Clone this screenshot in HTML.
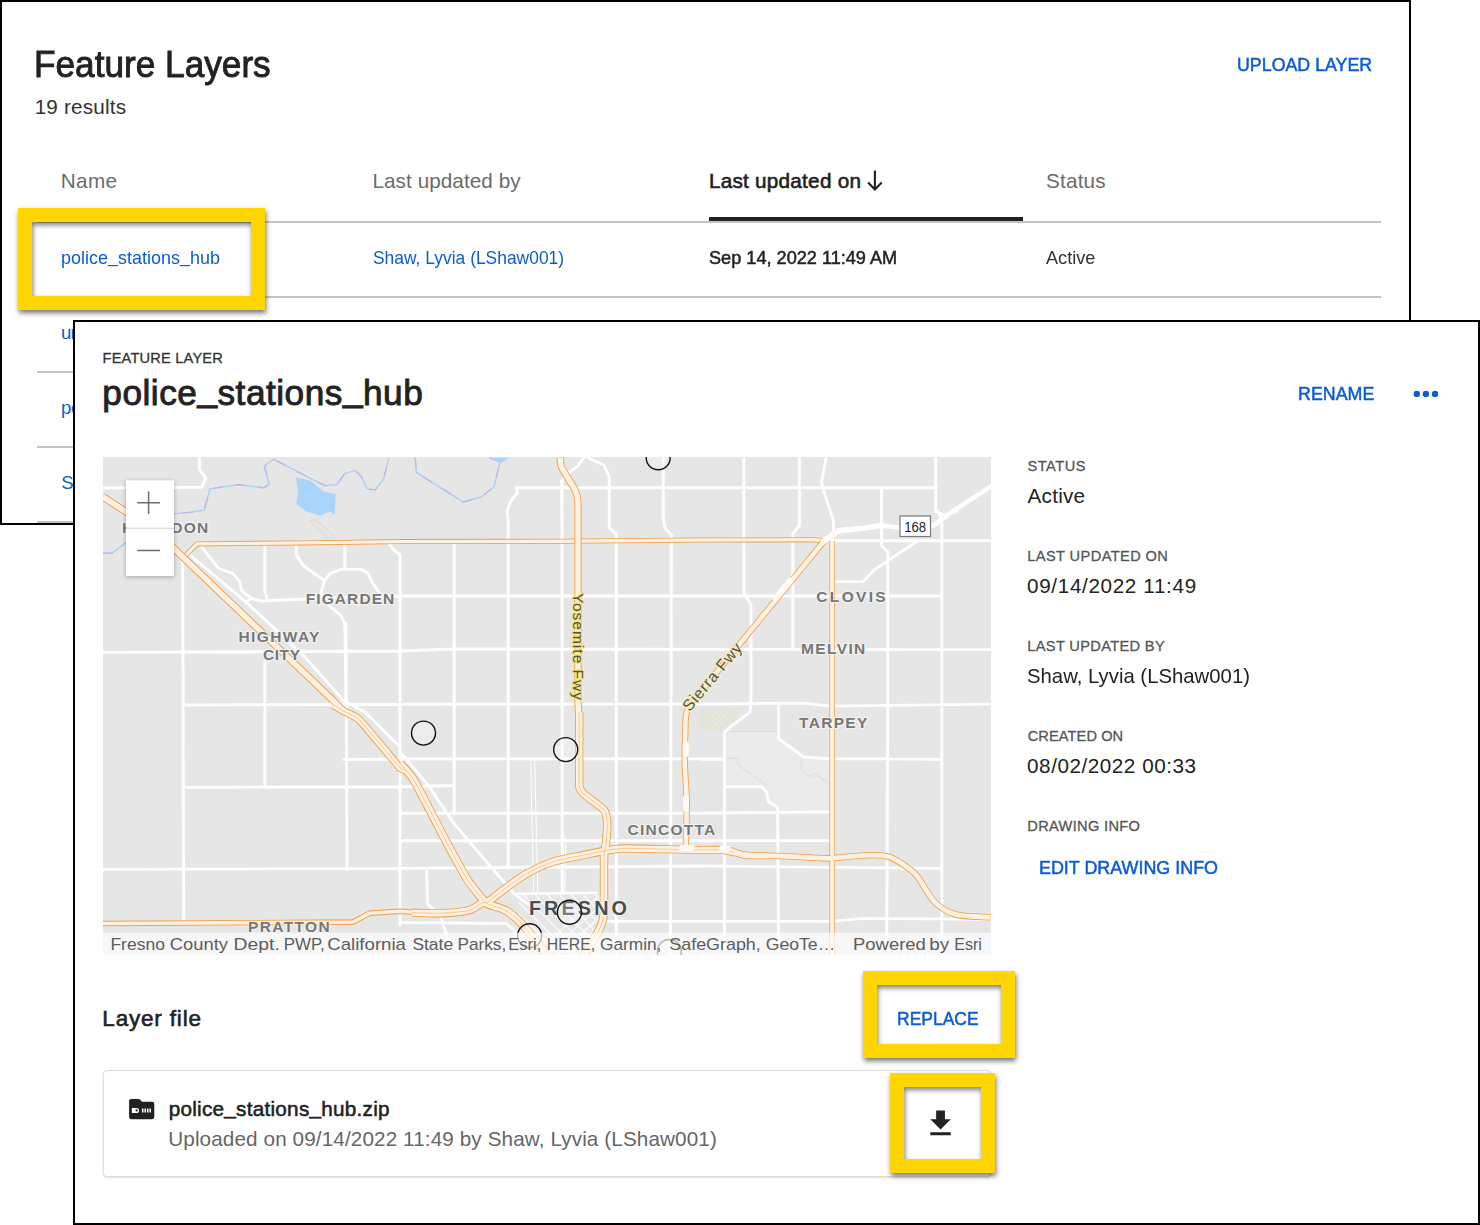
<!DOCTYPE html>
<html lang="en"><head><meta charset="utf-8"><title>Feature Layers</title>
<style>
html,body{margin:0;padding:0;background:#fff;}
body{width:1480px;height:1225px;position:relative;overflow:hidden;font-family:"Liberation Sans",sans-serif;}
.t{position:absolute;white-space:nowrap;line-height:1;}
.abs{position:absolute;}
.u{position:relative;top:-0.12em;}
.panel{position:absolute;box-sizing:border-box;border:2px solid #000;background:#fff;}
.hl{position:absolute;box-sizing:border-box;border:14.5px solid #ffd600;box-shadow:1px 3px 5px rgba(0,0,0,.55), inset 1px 3px 5px rgba(0,0,0,.5);}
.line{position:absolute;height:2px;background:#c4c4c4;}
</style></head><body>
    
<section class="list-view">
<div class="panel" style="left:0;top:0;width:1411px;height:525px;"></div>
<div class="t" style="left:33.72px;top:46.61px;font-size:36.01px;color:#222;-webkit-text-stroke:0.9px #222;transform:scaleX(0.9777);transform-origin:0 0;">Feature Layers</div>
<div class="t" style="left:34.65px;top:96.51px;font-size:20.7px;color:#333;letter-spacing:0.194px;">19 results</div>
<div class="t" style="left:1236.70px;top:55.90px;font-size:18.6px;color:#0b5cd6;-webkit-text-stroke:0.5px #0b5cd6;transform:scaleX(0.9575);transform-origin:0 0;">UPLOAD LAYER</div>
<div class="t" style="left:60.64px;top:170.51px;font-size:20.7px;color:#6b6b6b;letter-spacing:0.406px;">Name</div>
<div class="t" style="left:372.44px;top:170.51px;font-size:20.7px;color:#6b6b6b;letter-spacing:0.070px;">Last updated by</div>
<div class="t" style="left:708.94px;top:170.51px;font-size:20.7px;color:#222;letter-spacing:0.256px;-webkit-text-stroke:0.6px #222;">Last updated on</div>
<svg class="abs" style="left:864px;top:170px" width="22" height="22" viewBox="0 0 22 22"><path d="M10.9 0.6V19.4M4.1 12.6L10.9 19.6L17.7 12.6" fill="none" stroke="#222" stroke-width="2.1"/></svg>
<div class="t" style="left:1045.97px;top:170.51px;font-size:20.7px;color:#6b6b6b;letter-spacing:0.214px;">Status</div>
<div class="abs" style="left:709px;top:217px;width:314px;height:4.3px;background:#222"></div>
<div class="line" style="left:37px;top:221px;width:1344px;"></div>
<div class="line" style="left:37px;top:296px;width:1344px;"></div>
<div class="line" style="left:37px;top:371px;width:1344px;"></div>
<div class="line" style="left:37px;top:446px;width:1344px;"></div>
<div class="line" style="left:37px;top:521px;width:1344px;"></div>
<div class="t" style="left:60.92px;top:249.40px;font-size:18.6px;color:#0b5cd6;transform:scaleX(0.9670);transform-origin:0 0;">police<span class="u">_</span>stations<span class="u">_</span>hub</div>
<div class="t" style="left:372.92px;top:249.40px;font-size:18.6px;color:#0b5cd6;transform:scaleX(0.9367);transform-origin:0 0;">Shaw, Lyvia (LShaw001)</div>
<div class="t" style="left:708.93px;top:249.40px;font-size:18.6px;color:#222;-webkit-text-stroke:0.5px #222;transform:scaleX(0.9752);transform-origin:0 0;">Sep 14, 2022 11:49 AM</div>
<div class="t" style="left:1046.30px;top:249.40px;font-size:18.6px;color:#333;transform:scaleX(0.9770);transform-origin:0 0;">Active</div>
<div class="t" style="left:60.88px;top:324.40px;font-size:18.6px;color:#0b5cd6;letter-spacing:-0.659px;">ur</div>
<div class="t" style="left:60.88px;top:399.40px;font-size:18.6px;color:#0b5cd6;letter-spacing:-0.286px;">po</div>
<div class="t" style="left:61.16px;top:474.40px;font-size:18.6px;color:#0b5cd6;letter-spacing:-0.147px;">St</div>
<div class="hl" style="left:18px;top:208px;width:247px;height:101.8px;"></div>
</section>
<section class="detail-view">
<div class="panel" style="left:73px;top:320px;width:1407px;height:905px;"></div>
<div class="t" style="left:102.58px;top:350.80px;font-size:14.6px;color:#333;letter-spacing:0.196px;-webkit-text-stroke:0.3px #333;">FEATURE LAYER</div>
<div class="t" style="left:102.34px;top:375.41px;font-size:35.2px;color:#222;letter-spacing:0.520px;-webkit-text-stroke:0.9px #222;">police<span class="u">_</span>stations<span class="u">_</span>hub</div>
<div class="t" style="left:1298.41px;top:384.90px;font-size:18.6px;color:#0b5cd6;-webkit-text-stroke:0.5px #0b5cd6;transform:scaleX(0.9591);transform-origin:0 0;">RENAME</div>
<svg class="abs" style="left:1410px;top:388px" width="32" height="12" viewBox="0 0 32 12"><g fill="#0b5cd6"><circle cx="6.8" cy="5.9" r="3.2"/><circle cx="15.9" cy="5.9" r="3.2"/><circle cx="25" cy="5.9" r="3.2"/></g></svg>
<div class="t" style="left:1027.49px;top:458.61px;font-size:14.6px;color:#555;letter-spacing:0.507px;-webkit-text-stroke:0.3px #555;">STATUS</div>
<div class="t" style="left:1027.60px;top:485.81px;font-size:20.7px;color:#222;letter-spacing:0.225px;">Active</div>
<div class="t" style="left:1027.28px;top:548.61px;font-size:14.6px;color:#555;letter-spacing:0.411px;-webkit-text-stroke:0.3px #555;">LAST UPDATED ON</div>
<div class="t" style="left:1027.08px;top:576.01px;font-size:20.7px;color:#222;letter-spacing:0.637px;">09/14/2022 11:49</div>
<div class="t" style="left:1027.28px;top:638.61px;font-size:14.6px;color:#555;letter-spacing:0.355px;-webkit-text-stroke:0.3px #555;">LAST UPDATED BY</div>
<div class="t" style="left:1026.88px;top:666.01px;font-size:20.7px;color:#222;transform:scaleX(0.9826);transform-origin:0 0;">Shaw, Lyvia (LShaw001)</div>
<div class="t" style="left:1027.72px;top:728.61px;font-size:14.6px;color:#555;letter-spacing:0.091px;-webkit-text-stroke:0.3px #555;">CREATED ON</div>
<div class="t" style="left:1027.08px;top:756.01px;font-size:20.7px;color:#222;letter-spacing:0.527px;">08/02/2022 00:33</div>
<div class="t" style="left:1027.28px;top:818.61px;font-size:14.6px;color:#555;letter-spacing:0.346px;-webkit-text-stroke:0.3px #555;">DRAWING INFO</div>
<div class="t" style="left:1039.21px;top:858.70px;font-size:18.6px;color:#0b5cd6;-webkit-text-stroke:0.5px #0b5cd6;transform:scaleX(0.9626);transform-origin:0 0;">EDIT DRAWING INFO</div>
<svg class="abs" style="left:103px;top:457px" width="888" height="498" viewBox="103 457 888 498" font-family="Liberation Sans, sans-serif">
<rect x="103" y="457" width="888" height="498" fill="#e6e6e6"/>
<path d="M726.5 731.6 L776.5 731.6 L778.6 738.8 L804.1 757.1 L830.6 758.2 L830.6 810.2 L778.6 810.2 L777.6 807.1 L767.3 802.0 L765.3 789.8 L761.2 786.7 L726.5 786.7Z" fill="#ebebeb"/>
<path d="M726.5 758.2 L737.8 758.2 L737.8 764.9 L767.3 785.7" fill="none" stroke="#d2d2d2" stroke-width="0.6"/>
<path d="M726.5 731.6 L776.5 731.6" fill="none" stroke="#d2d2d2" stroke-width="0.6"/>
<path d="M801.4 758.2 L801.4 768.4 L799.4 769.8 L811.2 777.1 L814.3 773.5 L829.6 783.3" fill="none" stroke="#d2d2d2" stroke-width="0.6"/>
<path d="M700.0 708.2 L736.7 708.2 L736.7 720.4 L720.4 730.6 L700.0 730.6Z" fill="#e3e6e0"/>
<pattern id="pd" width="6" height="6" patternUnits="userSpaceOnUse"><circle cx="1.5" cy="1.5" r="0.7" fill="#e6dc9a"/><circle cx="4.5" cy="4.5" r="0.7" fill="#e6dc9a"/></pattern>
<path d="M700.0 708.2 L736.7 708.2 L736.7 720.4 L720.4 730.6 L700.0 730.6Z" fill="url(#pd)"/>
<path d="M295.9 477.6 L310.2 480.6 L324.5 491.8 L335.7 493.9 L334.7 515.3 L330.6 511.2 L320.4 515.7 L306.1 511.2 L296.3 504.1 L298.0 490.8Z" fill="#a9d4fb"/>
<path d="M492.9 457.8 L509.2 457.8 L500.0 463.5Z" fill="#a9d4fb"/>
<path d="M102.9 553.1 L112.2 553.1 L125.5 542.9 L140.8 531.6 L174.5 513.7 L191.8 512.2 L204.1 510.2 L210.2 488.8 L238.8 484.7 L263.3 487.8 L269.4 484.7 L264.3 466.3 L273.5 459.2 L324.5 485.7 L336.7 484.7 L344.9 473.5 L355.1 470.4 L361.2 476.5 L367.3 488.8 L375.5 489.8 L383.7 478.6 L388.8 458.2 M415.3 457.8 L416.3 472.4 L463.3 502.0 L481.6 496.9 L493.9 486.7 L500.0 462.2 L489.8 457.8" fill="none" stroke="#a3cff7" stroke-width="1.3"/>
<path d="M102.9 553.1 L112.2 553.1 L125.5 542.9 L140.8 531.6 L174.5 513.7 L191.8 512.2 L204.1 510.2 L210.2 488.8 L238.8 484.7 L263.3 487.8 L269.4 484.7 L264.3 466.3 L273.5 459.2 L324.5 485.7 L336.7 484.7 L344.9 473.5 L355.1 470.4 L361.2 476.5 L367.3 488.8 L375.5 489.8 L383.7 478.6 L388.8 458.2 M415.3 457.8 L416.3 472.4 L463.3 502.0 L481.6 496.9 L493.9 486.7 L500.0 462.2 L489.8 457.8" fill="none" stroke="#c4b3e6" stroke-width="1.3" stroke-dasharray="10 13"/>
<path d="M309.2 520.4 L316.3 520.4 L336.7 537.8 L324.5 537.8 L324.5 534.7 L309.2 520.4" fill="none" stroke="#cfcfcf" stroke-width="0.6"/>
<clipPath id="dt"><path d="M519 894.5H600V955H548L519 921Z"/></clipPath>
<path clip-path="url(#dt)" fill="none" stroke="#fff" stroke-opacity=".85" stroke-width="1.3" d="M427.0 894.5 L497.0 964.5 M439.0 894.5 L509.0 964.5 M451.0 894.5 L521.0 964.5 M463.0 894.5 L533.0 964.5 M475.0 894.5 L545.0 964.5 M487.0 894.5 L557.0 964.5 M499.0 894.5 L569.0 964.5 M511.0 894.5 L581.0 964.5 M523.0 894.5 L593.0 964.5 M535.0 894.5 L605.0 964.5 M547.0 894.5 L617.0 964.5 M559.0 894.5 L629.0 964.5 M571.0 894.5 L641.0 964.5 M583.0 894.5 L653.0 964.5 M595.0 894.5 L665.0 964.5 M607.0 894.5 L677.0 964.5 M619.0 894.5 L689.0 964.5 M631.0 894.5 L701.0 964.5 M523.0 964.5 L601.0 894.5 M535.0 964.5 L613.0 894.5 M547.0 964.5 L625.0 894.5 M559.0 964.5 L637.0 894.5 M571.0 964.5 L649.0 894.5 M583.0 964.5 L661.0 894.5 M595.0 964.5 L673.0 894.5 M607.0 964.5 L685.0 894.5 M619.0 964.5 L697.0 894.5 M631.0 964.5 L709.0 894.5 M643.0 964.5 L721.0 894.5 M655.0 964.5 L733.0 894.5 M667.0 964.5 L745.0 894.5 M679.0 964.5 L757.0 894.5"/>
<g fill="none" stroke="#fff" stroke-linejoin="round" stroke-linecap="round">
<path stroke-width="1" d="M530.6 760.2 L533.7 891.8 M534.7 760.2 L537.8 891.8 M530.6 760.2 L562.2 759.2 M563.3 832.7 L565.7 842.9 L564.9 891.8"/>
<path stroke-width="2.9" d="M182.7 560.0 L183.7 922.4 M264.9 544.0 L264.9 590.8 L267.3 600.0 M264.9 652.0 L264.9 785.7 M400.0 555.0 L400.0 925.0 M454.1 543.0 L454.1 814.0 M562.0 480.6 L562.2 892.0 M616.3 533.7 L616.3 955.0 M671.4 534.7 L670.4 955.0 M832.2 541.0 L832.2 955.0 M516.3 487.7 L936.7 487.7 M833.0 540.8 L991.0 540.8 M306.0 598.6 L400.0 596.0 L941.8 595.9 M103.0 652.4 L400.0 651.0 L454.0 649.0 L991.0 649.6 M183.7 705.0 L400.0 704.2 L700.0 704.1 L802.0 703.1 L830.6 706.1 L991.0 704.1 M343.9 759.6 L400.0 759.0 L724.5 758.6 M831.6 758.6 L941.8 759.2 M184.7 787.3 L400.0 786.7 L451.0 785.7 M400.0 813.3 L700.0 813.3 L831.6 811.8 M400.0 840.8 L700.0 840.8 L831.0 840.4 M103.0 869.4 L400.0 868.4 L700.0 866.0 L941.8 868.4 M608.0 921.4 L832.0 921.4 L863.0 918.4 L991.0 919.4 M199.4 457.8 L199.4 469.4 L205.7 478.2 L202.0 487.3 L102.9 488.0 M187.8 553.1 L245.9 602.0 L304.1 656.1 L342.9 700.0 M200.0 544.9 L218.4 568.4 L232.7 573.5 L239.8 581.6 L241.8 590.8 L251.0 598.0 L261.2 601.0 L306.1 599.0 M245.9 602.7 L251.4 597.8 M295.9 544.9 L296.9 556.1 L304.1 566.3 L324.5 580.6 L321.4 590.8 L323.5 601.0 L340.8 615.3 L344.9 623.5 L345.9 700.0 M324.5 580.6 L330.6 573.1 L340.8 569.4 L361.2 569.4 L367.8 573.1 L373.5 584.7 L380.0 593.5 L385.7 598.0 M344.9 544.9 L344.9 569.4 M389.8 544.9 L393.9 550.0 L400.0 554.5 L400.0 564.3 M346.0 623.5 L347.0 869.4 M583.7 457.8 L577.6 466.3 L569.4 472.4 L561.6 480.6 L562.2 539.8 M587.8 457.8 L604.1 465.3 L609.2 476.5 L609.2 527.6 L616.3 534.1 M663.3 457.8 L663.3 519.4 L665.3 528.6 L671.4 535.1 M516.3 487.8 L517.3 492.9 L510.2 502.0 L507.1 511.2 L508.2 521.4 L508.2 700.0 M508.2 700.0 L508.2 868.4 M743.9 457.8 L743.9 592.9 L751.0 605.1 L751.0 700.0 M799.4 457.8 L799.4 525.5 L792.9 533.7 L792.9 650.0 M826.1 457.8 L821.4 482.7 L827.6 503.1 L833.7 521.4 L833.7 531.6 M935.7 457.8 L935.7 509.2 L941.8 517.3 L941.8 700.0 M881.6 487.8 L881.6 545.9 L887.8 552.0 L887.8 700.0 M916.3 541.8 L873.5 570.4 L863.3 581.6 L831.6 581.6 M832.7 532.7 L863.3 529.6 L879.6 527.1 L902.0 526.5 M935.7 511.2 L944.9 515.3 L957.1 511.2 M342.9 700.0 L365.3 712.2 L400.0 746.9 M400.0 752.0 L428.6 785.7 L453.1 822.4 L487.8 863.3 L514.3 893.9 L530.6 906.1 M426.5 868.4 L427.6 904.1 L440.8 916.3 L451.0 950.0 M514.3 893.9 L595.9 892.9 M400.0 922.4 L506.1 923.5 L514.3 930.6 L522.4 950.0 M751.0 700.0 L750.0 712.2 L730.6 726.5 L724.5 732.7 L724.5 950.0 M778.6 704.1 L778.6 738.8 L804.1 757.1 L831.6 758.8 M700.0 759.2 L724.5 759.2 M725.5 786.7 L761.2 786.7 L766.3 791.8 L768.4 802.0 L777.6 807.1 L778.6 950.0 M887.8 700.0 L886.7 950.0 M941.8 700.0 L941.8 950.0"/>
<path stroke-width="4.5" d="M828.6 538.8 L838.8 530.0 L863.3 528.0 L879.6 525.1 L901.0 528.0 L932.7 525.9 L955.1 509.6 L990.8 486.7"/>
</g>
<g fill="none" stroke-linejoin="round" stroke-linecap="butt">
<path d="M182.7 558.6 L196.9 543.9 L304.1 542.9 L400.0 541.6 L563.3 541.2 L700.0 540.0 L814.3 539.8 L822.4 540.8" stroke="#f29c3e" stroke-width="5.0"/>
<path d="M182.7 558.6 L196.9 543.9 L304.1 542.9 L400.0 541.6 L563.3 541.2 L700.0 540.0 L814.3 539.8 L822.4 540.8" stroke="#fdf1e1" stroke-width="3.4"/>
<path d="M102.9 496.9 C110.0 501.5 119.5 507.6 126.5 512.2 C137.0 519.2 154.5 530.6 161.2 535.7 C165.7 539.1 170.4 545.1 174.5 549.0 C180.6 554.8 327.9 695.4 332.7 700.0 C335.8 703.1 339.8 707.4 342.9 710.6" stroke="#f29c3e" stroke-width="7.4"/>
<path d="M332.7 704.5 C335.7 706.3 339.8 708.8 342.9 710.6 C347.5 713.3 355.2 715.8 359.2 719.8 C365.1 725.8 398.0 765.6 400.0 767.8 C401.4 769.2 404.3 769.6 406.1 770.4" stroke="#f29c3e" stroke-width="8.0"/>
<path d="M400.0 763.3 C403.7 767.6 409.0 772.9 412.2 777.6 C415.8 782.7 419.5 790.4 422.4 795.9 C426.9 804.3 439.4 828.9 446.9 842.9 C452.9 854.0 461.8 870.7 467.3 879.6 C471.1 885.5 479.1 895.0 481.6 898.0 C483.3 900.0 485.4 902.9 487.8 904.1 C491.2 905.9 501.1 907.6 506.1 910.6 C511.7 913.9 518.1 919.8 522.4 924.5 C529.0 931.6 539.6 945.9 546.9 955.1" stroke="#f29c3e" stroke-width="8.6"/>
<path d="M560.2 457.8 C560.5 460.3 560.3 463.9 561.2 466.3 C562.7 469.9 566.9 476.3 569.4 480.6 C571.2 483.7 574.2 487.5 575.5 490.8 C576.8 494.3 577.9 499.3 578.0 503.1 C578.1 508.7 578.0 565.9 578.0 592.9 C578.0 625.0 577.9 690.8 578.0 700.0 C578.0 706.1 578.8 714.3 579.2 720.4" stroke="#f29c3e" stroke-width="7.2"/>
<path d="M579.2 712.2 C579.2 734.3 579.0 781.5 579.2 785.7 C579.3 788.5 581.7 791.9 583.7 793.9 C586.7 796.8 600.5 805.8 604.1 810.2 C606.5 813.1 606.9 818.7 607.1 822.4 C607.5 828.1 606.6 837.3 606.1 842.9 C605.8 846.6 604.2 851.4 604.1 855.1 C603.9 860.7 604.2 906.8 603.7 914.3 C603.3 919.3 601.2 925.7 599.0 930.2 C595.7 936.9 588.3 947.6 583.7 955.1" stroke="#f29c3e" stroke-width="8.4"/>
<path d="M102.9 923.5 L353.1 922.0 L369.4 913.3 L400.0 911.2 L420.4 912.7" stroke="#f29c3e" stroke-width="5.4"/>
<path d="M412.2 912.7 C420.8 912.8 432.3 913.6 440.8 913.3 C449.4 912.9 463.2 911.8 469.4 910.2 C473.5 909.2 479.1 904.2 481.6 903.1 C483.3 902.3 486.2 903.0 487.8 902.0 C490.1 900.6 500.4 891.8 506.1 887.8 C513.3 882.6 522.8 875.6 530.6 871.4 C537.6 867.6 547.5 863.6 555.1 861.2 C563.5 858.6 575.1 856.9 583.7 855.1 C590.4 853.7 599.3 851.7 606.1 850.6 C611.6 849.7 618.9 848.4 624.5 848.4 C632.8 848.3 689.0 849.8 700.0 850.0 C707.3 850.1 719.8 849.7 724.5 850.0 C727.6 850.2 731.6 851.7 734.7 852.4" stroke="#f29c3e" stroke-width="8.2"/>
<path d="M720.4 850.0 C724.1 850.6 729.0 851.3 732.7 852.0 C736.4 852.8 741.1 854.7 744.9 855.1 C750.5 855.7 760.6 855.5 767.3 855.7" stroke="#f29c3e" stroke-width="7.3"/>
<path d="M736.7 853.5 C739.2 854.0 742.4 855.0 744.9 855.1 C748.6 855.3 770.6 855.7 781.6 856.1 C793.9 856.6 817.9 858.0 822.4 858.2 C825.5 858.3 829.6 858.4 832.7 858.2 C837.2 857.9 860.2 855.3 869.4 855.1 C875.5 855.0 884.0 855.1 889.8 857.1 C896.5 859.5 906.0 866.4 910.2 869.4 C913.0 871.4 916.3 874.8 918.4 877.6 C921.5 881.7 928.5 895.8 934.7 902.0 C939.7 907.1 948.2 912.4 955.1 914.3 C965.4 917.1 980.1 916.4 990.8 917.3" stroke="#f29c3e" stroke-width="6.4"/>
<path d="M826.0 540.0 C824.8 541.0 823.0 542.3 822.0 543.5 C820.5 545.3 692.6 701.6 689.5 705.5 C687.4 708.1 686.5 712.7 686.0 716.0 C685.2 720.9 685.5 727.7 685.3 732.7 C685.1 740.2 684.5 752.7 684.7 761.2 C684.9 773.5 686.6 789.8 686.7 802.0 C686.9 816.4 686.0 835.6 685.7 850.0" stroke="#f29c3e" stroke-width="6.2"/>
<path d="M832.2 541.0 L832.2 955.0" stroke="#f29c3e" stroke-width="5.6"/>
<path d="M102.9 496.9 C110.0 501.5 119.5 507.6 126.5 512.2 C137.0 519.2 154.5 530.6 161.2 535.7 C165.7 539.1 170.4 545.1 174.5 549.0 C180.6 554.8 327.9 695.4 332.7 700.0 C335.8 703.1 339.8 707.4 342.9 710.6" stroke="#fdf1e1" stroke-width="5.6"/>
<path d="M332.7 704.5 C335.7 706.3 339.8 708.8 342.9 710.6 C347.5 713.3 355.2 715.8 359.2 719.8 C365.1 725.8 398.0 765.6 400.0 767.8 C401.4 769.2 404.3 769.6 406.1 770.4" stroke="#fdf1e1" stroke-width="6.2"/>
<path d="M400.0 763.3 C403.7 767.6 409.0 772.9 412.2 777.6 C415.8 782.7 419.5 790.4 422.4 795.9 C426.9 804.3 439.4 828.9 446.9 842.9 C452.9 854.0 461.8 870.7 467.3 879.6 C471.1 885.5 479.1 895.0 481.6 898.0 C483.3 900.0 485.4 902.9 487.8 904.1 C491.2 905.9 501.1 907.6 506.1 910.6 C511.7 913.9 518.1 919.8 522.4 924.5 C529.0 931.6 539.6 945.9 546.9 955.1" stroke="#fdf1e1" stroke-width="6.8"/>
<path d="M560.2 457.8 C560.5 460.3 560.3 463.9 561.2 466.3 C562.7 469.9 566.9 476.3 569.4 480.6 C571.2 483.7 574.2 487.5 575.5 490.8 C576.8 494.3 577.9 499.3 578.0 503.1 C578.1 508.7 578.0 565.9 578.0 592.9 C578.0 625.0 577.9 690.8 578.0 700.0 C578.0 706.1 578.8 714.3 579.2 720.4" stroke="#fdf1e1" stroke-width="5.5"/>
<path d="M579.2 712.2 C579.2 734.3 579.0 781.5 579.2 785.7 C579.3 788.5 581.7 791.9 583.7 793.9 C586.7 796.8 600.5 805.8 604.1 810.2 C606.5 813.1 606.9 818.7 607.1 822.4 C607.5 828.1 606.6 837.3 606.1 842.9 C605.8 846.6 604.2 851.4 604.1 855.1 C603.9 860.7 604.2 906.8 603.7 914.3 C603.3 919.3 601.2 925.7 599.0 930.2 C595.7 936.9 588.3 947.6 583.7 955.1" stroke="#fdf1e1" stroke-width="6.7"/>
<path d="M102.9 923.5 L353.1 922.0 L369.4 913.3 L400.0 911.2 L420.4 912.7" stroke="#fdf1e1" stroke-width="3.6"/>
<path d="M412.2 912.7 C420.8 912.8 432.3 913.6 440.8 913.3 C449.4 912.9 463.2 911.8 469.4 910.2 C473.5 909.2 479.1 904.2 481.6 903.1 C483.3 902.3 486.2 903.0 487.8 902.0 C490.1 900.6 500.4 891.8 506.1 887.8 C513.3 882.6 522.8 875.6 530.6 871.4 C537.6 867.6 547.5 863.6 555.1 861.2 C563.5 858.6 575.1 856.9 583.7 855.1 C590.4 853.7 599.3 851.7 606.1 850.6 C611.6 849.7 618.9 848.4 624.5 848.4 C632.8 848.3 689.0 849.8 700.0 850.0 C707.3 850.1 719.8 849.7 724.5 850.0 C727.6 850.2 731.6 851.7 734.7 852.4" stroke="#fdf1e1" stroke-width="6.5"/>
<path d="M720.4 850.0 C724.1 850.6 729.0 851.3 732.7 852.0 C736.4 852.8 741.1 854.7 744.9 855.1 C750.5 855.7 760.6 855.5 767.3 855.7" stroke="#fdf1e1" stroke-width="5.7"/>
<path d="M736.7 853.5 C739.2 854.0 742.4 855.0 744.9 855.1 C748.6 855.3 770.6 855.7 781.6 856.1 C793.9 856.6 817.9 858.0 822.4 858.2 C825.5 858.3 829.6 858.4 832.7 858.2 C837.2 857.9 860.2 855.3 869.4 855.1 C875.5 855.0 884.0 855.1 889.8 857.1 C896.5 859.5 906.0 866.4 910.2 869.4 C913.0 871.4 916.3 874.8 918.4 877.6 C921.5 881.7 928.5 895.8 934.7 902.0 C939.7 907.1 948.2 912.4 955.1 914.3 C965.4 917.1 980.1 916.4 990.8 917.3" stroke="#fdf1e1" stroke-width="4.8"/>
<path d="M826.0 540.0 C824.8 541.0 823.0 542.3 822.0 543.5 C820.5 545.3 692.6 701.6 689.5 705.5 C687.4 708.1 686.5 712.7 686.0 716.0 C685.2 720.9 685.5 727.7 685.3 732.7 C685.1 740.2 684.5 752.7 684.7 761.2 C684.9 773.5 686.6 789.8 686.7 802.0 C686.9 816.4 686.0 835.6 685.7 850.0" stroke="#fdf1e1" stroke-width="4.6"/>
<path d="M832.2 541.0 L832.2 955.0" stroke="#fdf1e1" stroke-width="4.2"/>
<path d="M332.7 704.5 C335.7 706.3 339.8 708.8 342.9 710.6 C347.5 713.3 355.2 715.8 359.2 719.8 C365.1 725.8 398.0 765.6 400.0 767.8 C401.4 769.2 404.3 769.6 406.1 770.4" stroke="#f7bd82" stroke-width="0.8"/>
<path d="M400.0 763.3 C403.7 767.6 409.0 772.9 412.2 777.6 C415.8 782.7 419.5 790.4 422.4 795.9 C426.9 804.3 439.4 828.9 446.9 842.9 C452.9 854.0 461.8 870.7 467.3 879.6 C471.1 885.5 479.1 895.0 481.6 898.0 C483.3 900.0 485.4 902.9 487.8 904.1 C491.2 905.9 501.1 907.6 506.1 910.6 C511.7 913.9 518.1 919.8 522.4 924.5 C529.0 931.6 539.6 945.9 546.9 955.1" stroke="#f7bd82" stroke-width="0.8"/>
<path d="M579.2 712.2 C579.2 734.3 579.0 781.5 579.2 785.7 C579.3 788.5 581.7 791.9 583.7 793.9 C586.7 796.8 600.5 805.8 604.1 810.2 C606.5 813.1 606.9 818.7 607.1 822.4 C607.5 828.1 606.6 837.3 606.1 842.9 C605.8 846.6 604.2 851.4 604.1 855.1 C603.9 860.7 604.2 906.8 603.7 914.3 C603.3 919.3 601.2 925.7 599.0 930.2 C595.7 936.9 588.3 947.6 583.7 955.1" stroke="#f7bd82" stroke-width="0.8"/>
<path d="M412.2 912.7 C420.8 912.8 432.3 913.6 440.8 913.3 C449.4 912.9 463.2 911.8 469.4 910.2 C473.5 909.2 479.1 904.2 481.6 903.1 C483.3 902.3 486.2 903.0 487.8 902.0 C490.1 900.6 500.4 891.8 506.1 887.8 C513.3 882.6 522.8 875.6 530.6 871.4 C537.6 867.6 547.5 863.6 555.1 861.2 C563.5 858.6 575.1 856.9 583.7 855.1 C590.4 853.7 599.3 851.7 606.1 850.6 C611.6 849.7 618.9 848.4 624.5 848.4 C632.8 848.3 689.0 849.8 700.0 850.0 C707.3 850.1 719.8 849.7 724.5 850.0 C727.6 850.2 731.6 851.7 734.7 852.4" stroke="#f7bd82" stroke-width="0.8"/>
</g>
<path d="M775.5 598.5L790.5 580.5M685.9 744V754M686 798V809M824 541L834 534M682 848H692M722 848.5H728" stroke="#fffaf3" stroke-width="6" stroke-linecap="round" fill="none"/>
<rect x="900" y="516" width="30.5" height="20.5" fill="#fff" stroke="#7a7a7a" stroke-width="1.2"/>
<text x="915.2" y="532" font-size="14" fill="#222" text-anchor="middle" textLength="22" lengthAdjust="spacingAndGlyphs">168</text>
<text x="122" y="532.6" font-size="15.5" font-weight="bold" fill="#767676" stroke="#f4f4f4" stroke-width="2.2" paint-order="stroke" stroke-linejoin="round" textLength="86.2" lengthAdjust="spacing">HERNDON</text>
<text x="305.7" y="604.1" font-size="15.5" font-weight="bold" fill="#767676" stroke="#f4f4f4" stroke-width="2.2" paint-order="stroke" stroke-linejoin="round" textLength="88.6" lengthAdjust="spacing">FIGARDEN</text>
<text x="238.4" y="641.8" font-size="15.5" font-weight="bold" fill="#767676" stroke="#f4f4f4" stroke-width="2.2" paint-order="stroke" stroke-linejoin="round" textLength="81.0" lengthAdjust="spacing">HIGHWAY</text>
<text x="262.9" y="660.2" font-size="15.5" font-weight="bold" fill="#767676" stroke="#f4f4f4" stroke-width="2.2" paint-order="stroke" stroke-linejoin="round" textLength="37.1" lengthAdjust="spacing">CITY</text>
<text x="816.3" y="602" font-size="15.5" font-weight="bold" fill="#767676" stroke="#f4f4f4" stroke-width="2.2" paint-order="stroke" stroke-linejoin="round" textLength="69.4" lengthAdjust="spacing">CLOVIS</text>
<text x="801" y="654.1" font-size="15.5" font-weight="bold" fill="#767676" stroke="#f4f4f4" stroke-width="2.2" paint-order="stroke" stroke-linejoin="round" textLength="64.3" lengthAdjust="spacing">MELVIN</text>
<text x="799" y="727.6" font-size="15.5" font-weight="bold" fill="#767676" stroke="#f4f4f4" stroke-width="2.2" paint-order="stroke" stroke-linejoin="round" textLength="68.3" lengthAdjust="spacing">TARPEY</text>
<text x="627.6" y="834.7" font-size="15.5" font-weight="bold" fill="#767676" stroke="#f4f4f4" stroke-width="2.2" paint-order="stroke" stroke-linejoin="round" textLength="87.7" lengthAdjust="spacing">CINCOTTA</text>
<text x="248" y="931.6" font-size="15.5" font-weight="bold" fill="#767676" stroke="#f4f4f4" stroke-width="2.2" paint-order="stroke" stroke-linejoin="round" textLength="81.6" lengthAdjust="spacing">PRATTON</text>
<text x="528.9" y="914.8" font-size="19.8" font-weight="bold" fill="#4c4c50" stroke="#f4f4f4" stroke-width="2.2" paint-order="stroke" stroke-linejoin="round" textLength="98.1" lengthAdjust="spacing">FRESNO</text>
<text transform="translate(572.5,593) rotate(90)" font-size="15.5" fill="#54523a" stroke="#f8e482" stroke-width="2.4" stroke-linejoin="round" paint-order="stroke" textLength="107" lengthAdjust="spacing">Yosemite Fwy</text>
<text transform="translate(689.8,712.3) rotate(-50.3)" font-size="15.8" fill="#54523e" stroke="#f4eec4" stroke-width="2.4" stroke-linejoin="round" paint-order="stroke" textLength="83" lengthAdjust="spacing">Sierra Fwy</text>
<circle cx="658.2" cy="457.8" r="12" fill="rgba(255,255,255,.25)" stroke="#111" stroke-width="1.4"/>
<circle cx="423.5" cy="733.1" r="12" fill="rgba(255,255,255,.25)" stroke="#111" stroke-width="1.4"/>
<circle cx="565.7" cy="749.6" r="12" fill="rgba(255,255,255,.25)" stroke="#111" stroke-width="1.4"/>
<circle cx="569.4" cy="912.2" r="12" fill="rgba(255,255,255,.25)" stroke="#111" stroke-width="1.4"/>
<circle cx="529.6" cy="935.7" r="12" fill="rgba(255,255,255,.25)" stroke="#111" stroke-width="1.4"/>
<circle cx="669.4" cy="951.5" r="12" fill="rgba(255,255,255,.25)" stroke="#111" stroke-width="1.4"/>
<rect x="103" y="932.7" width="888" height="22.3" fill="rgba(255,255,255,.68)"/>
<g font-size="17" fill="#5c5c5c">
<text x="110.4" y="949.6" textLength="54.5" lengthAdjust="spacingAndGlyphs">Fresno</text>
<text x="169.7" y="949.6" textLength="58.4" lengthAdjust="spacingAndGlyphs">County</text>
<text x="233.6" y="949.6" textLength="46.2" lengthAdjust="spacingAndGlyphs">Dept.</text>
<text x="283.8" y="949.6" textLength="41.0" lengthAdjust="spacingAndGlyphs">PWP,</text>
<text x="327.2" y="949.6" textLength="78.8" lengthAdjust="spacingAndGlyphs">California</text>
<text x="412.4" y="949.6" textLength="40.7" lengthAdjust="spacingAndGlyphs">State</text>
<text x="457.4" y="949.6" textLength="48.9" lengthAdjust="spacingAndGlyphs">Parks,</text>
<text x="508.2" y="949.6" textLength="33.1" lengthAdjust="spacingAndGlyphs">Esri,</text>
<text x="546.8" y="949.6" textLength="48.3" lengthAdjust="spacingAndGlyphs">HERE,</text>
<text x="600.0" y="949.6" textLength="61.4" lengthAdjust="spacingAndGlyphs">Garmin,</text>
<text x="669.3" y="949.6" textLength="91.5" lengthAdjust="spacingAndGlyphs">SafeGraph,</text>
<text x="765.7" y="949.6" textLength="69.6" lengthAdjust="spacingAndGlyphs">GeoTe…</text>
<text x="853.0" y="949.6" textLength="72.9" lengthAdjust="spacingAndGlyphs">Powered</text>
<text x="929.3" y="949.6" textLength="20.0" lengthAdjust="spacingAndGlyphs">by</text>
<text x="954.2" y="949.6" textLength="27.7" lengthAdjust="spacingAndGlyphs">Esri</text>
</g>
<rect x="126" y="480.3" width="48" height="95.7" fill="#fff" style="filter:drop-shadow(0 1px 2px rgba(0,0,0,.3))"/>
<path d="M126 528.2H174" stroke="#d0d0d0" stroke-width="1"/>
<path d="M137.2 502.7H160M148.6 491.3V514.1M137.2 550.4H160" stroke="#6e6e6e" stroke-width="1.5" fill="none"/>
</svg>
<div class="t" style="left:102.30px;top:1008.30px;font-size:22.5px;color:#222;letter-spacing:0.818px;-webkit-text-stroke:0.6px #222;">Layer file</div>
<div class="t" style="left:897.14px;top:1009.90px;font-size:18.6px;color:#0b5cd6;-webkit-text-stroke:0.5px #0b5cd6;transform:scaleX(0.9408);transform-origin:0 0;">REPLACE</div>
<div class="abs" style="left:103px;top:1070px;width:888px;height:107px;box-sizing:border-box;border:1px solid #dcdcdc;border-radius:4px;box-shadow:0 1px 2px rgba(0,0,0,.12);background:#fff"></div>
<svg class="abs" style="left:129.2px;top:1098.7px" width="26" height="21" viewBox="0 0 26 21"><path d="M2.2 0H9.4Q10.4 0 11.1 0.8L12.6 2.3Q13.1 2.8 14 2.8H23.2Q25.3 2.8 25.3 4.9V18.1Q25.3 20.2 23.2 20.2H2.2Q0.1 20.2 0.1 18.1V2.1Q0.1 0 2.2 0Z" fill="#212121"/><path d="M2.8 8.9H7.5A2.55 2.55 0 0 1 7.5 14H2.8Z" fill="#fff"/><circle cx="7.6" cy="11.4" r="1.15" fill="#212121"/><path d="M13.7 9.4V13.4M16.2 9.4V13.4M18.7 9.4V13.4M21.2 9.4V13.4" stroke="#fff" stroke-width="1.5"/></svg>
<div class="t" style="left:168.63px;top:1099.01px;font-size:20.7px;color:#222;letter-spacing:0.266px;-webkit-text-stroke:0.55px #222;">police<span class="u">_</span>stations<span class="u">_</span>hub.zip</div>
<div class="t" style="left:168.25px;top:1128.81px;font-size:20.7px;color:#666;letter-spacing:0.108px;">Uploaded on 09/14/2022 11:49 by Shaw, Lyvia (LShaw001)</div>
<svg class="abs" style="left:922.8px;top:1106.2px" width="35.1" height="35.1" viewBox="0 0 24 24"><path d="M19 9h-4V3H9v6H5l7 7 7-7zM5 18v2h14v-2H5z" fill="#222"/></svg>
<div class="hl" style="left:863px;top:971px;width:152px;height:87px;"></div>
<div class="hl" style="left:890px;top:1073px;width:105px;height:100px;"></div>
</section>
</body></html>
